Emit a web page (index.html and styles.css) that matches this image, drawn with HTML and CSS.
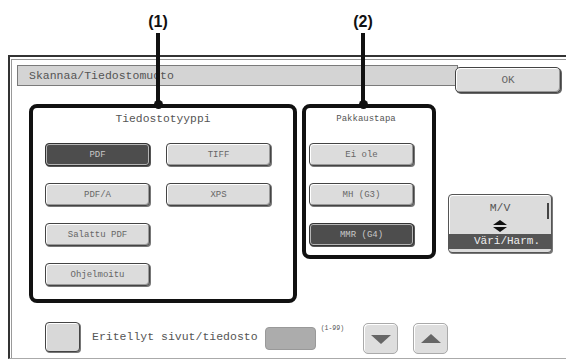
FILE: index.html
```html
<!DOCTYPE html>
<html>
<head>
<meta charset="utf-8">
<link rel="stylesheet" href="styles.css">
</head>
<body>
<div class="page">
  <div class="screen">
    <div class="inner">
      <div class="header">
        <div class="titlebar">Skannaa/Tiedostomuoto</div>
        <div class="okbtn">OK</div>
      </div>
      <div class="main">
        <div class="group g1">
          <div class="gtitle">Tiedostotyyppi</div>
          <div class="grid2">
            <div class="btn dark">PDF</div>
            <div class="btn">TIFF</div>
            <div class="btn">PDF/A</div>
            <div class="btn">XPS</div>
            <div class="btn">Salattu PDF</div>
            <div class="empty"></div>
            <div class="btn">Ohjelmoitu</div>
          </div>
        </div>
        <div class="group g2">
          <div class="gtitle small">Pakkaustapa</div>
          <div class="grid1">
            <div class="btn">Ei ole</div>
            <div class="btn">MH (G3)</div>
            <div class="btn dark">MMR (G4)</div>
          </div>
        </div>
        <div class="mv">
          <div class="mvtop">M/V</div>
          <span class="mvbar"></span>
          <svg class="mvarrows" width="14" height="12" viewBox="0 0 14 12">
            <polygon points="7,0 14,5 0,5" fill="#111"/>
            <polygon points="0,7 14,7 7,12" fill="#111"/>
          </svg>
          <div class="mvband">Väri/Harm.</div>
        </div>
      </div>
      <div class="bottom">
        <div class="check"></div>
        <div class="blabel">Eritellyt sivut/tiedosto</div>
        <div class="field"></div>
        <div class="range">(1-99)</div>
        <div class="arrowbtn down">
          <svg width="20" height="10" viewBox="0 0 20 10"><polygon points="0,0 20,0 10,9" fill="#666"/></svg>
        </div>
        <div class="arrowbtn up">
          <svg width="20" height="10" viewBox="0 0 20 10"><polygon points="0,9 20,9 10,0" fill="#666"/></svg>
        </div>
      </div>
    </div>
  </div>
  <div class="callout c1"><span class="clabel">(1)</span><i class="stem"></i><i class="dot"></i></div>
  <div class="callout c2"><span class="clabel">(2)</span><i class="stem"></i><i class="dot"></i></div>
</div>
</body>
</html>
```

FILE: styles.css
```css
html, body {
  margin: 0;
  padding: 0;
  background: #fff;
}
.page {
  position: relative;
  width: 566px;
  height: 361px;
  overflow: hidden;
  font-family: "Liberation Mono", "DejaVu Sans Mono", monospace;
}
.screen {
  margin: 55px 0 0 8px;
  height: 301px;
  border-top: 2px solid #333;
  border-left: 2px solid #333;
  border-bottom: 1px solid #aaa;
}
.inner {
  margin: 2px 0 0 1px;
  height: 299px;
  box-sizing: border-box;
  border-top: 1px solid #999;
  border-left: 1px solid #999;
}
.header {
  display: flex;
  align-items: flex-start;
  margin-top: 5px;
  height: 28px;
}
.titlebar {
  flex: 1;
  margin-left: 5px;
  height: 21px;
  box-sizing: border-box;
  border: 1px solid #7a7a7a;
  background: #d4d4d4;
  padding-left: 11px;
  font-size: 11.5px;
  line-height: 19px;
  color: #555;
}
.okbtn {
  width: 106px;
  height: 26px;
  box-sizing: border-box;
  margin: 2px 5px 0 -3px;
  border: 1px solid #444;
  border-radius: 5px;
  background: #dcdcdc;
  box-shadow: inset 1px 1px 0 #fff, inset -1px -1px 0 #999, 1px 1px 0 #666;
  font-size: 11px;
  line-height: 24px;
  text-align: center;
  color: #666;
}
.main {
  display: flex;
  align-items: flex-start;
  margin-top: 11px;
  padding-left: 17px;
}
.group {
  box-sizing: border-box;
  border: 4px solid #111;
  border-radius: 8px;
}
.g1 {
  width: 268px;
  height: 199px;
}
.g2 {
  width: 134px;
  height: 155px;
  margin-left: 5px;
}
.gtitle {
  padding-top: 4px;
  font-size: 11.3px;
  line-height: 14px;
  text-align: center;
  color: #555;
}
.gtitle.small {
  font-size: 9px;
  padding-right: 6px;
}
.grid2 {
  display: grid;
  grid-template-columns: 105px 105px;
  column-gap: 16px;
  row-gap: 17px;
  margin-top: 17px;
  padding-left: 12px;
}
.grid1 {
  display: grid;
  grid-template-columns: 105px;
  row-gap: 17px;
  margin-top: 17px;
  padding-left: 3px;
}
.btn {
  height: 23px;
  box-sizing: border-box;
  border: 1px solid #444;
  border-radius: 4px;
  background: #dcdcdc;
  box-shadow: inset 1px 1px 0 #fff, inset -1px -1px 0 #9a9a9a, 1px 1px 0 #777;
  font-size: 9px;
  color: #666;
  display: flex;
  align-items: center;
  justify-content: center;
}
.btn.dark {
  background: #4d4d4d;
  color: #c8c8c8;
  border-color: #333;
  box-shadow: inset 0 0 0 1px #b5b5b5, 1px 1px 0 #555;
}
.mv {
  position: relative;
  width: 104px;
  height: 59px;
  box-sizing: border-box;
  margin: 90px 0 0 12px;
  border: 1px solid #555;
  border-radius: 4px;
  background: #dcdcdc;
  box-shadow: inset 1px 1px 0 #fff, 1px 1px 0 #777;
  display: flex;
  flex-direction: column;
  align-items: center;
}
.mvtop {
  padding-top: 6px;
  font-size: 11.5px;
  line-height: 14px;
  color: #555;
}
.mvbar {
  position: absolute;
  right: 2px;
  top: 8px;
  width: 2px;
  height: 16px;
  background: #444;
}
.mvarrows {
  display: block;
  margin-top: 5px;
}
.mvband {
  align-self: stretch;
  margin-top: 2px;
  height: 15px;
  background: #555;
  color: #eee;
  font-size: 11px;
  line-height: 15px;
  text-align: center;
  padding-left: 14px;
}
.bottom {
  display: flex;
  align-items: flex-start;
  margin-top: 19px;
  padding-left: 33px;
}
.check {
  width: 35px;
  height: 30px;
  box-sizing: border-box;
  border: 1px solid #444;
  border-radius: 4px;
  background: #d8d8d8;
  box-shadow: inset 1px 1px 0 #fff, 1px 1px 0 #777;
}
.blabel {
  margin-left: 12px;
  font-size: 11.5px;
  line-height: 30px;
  color: #555;
}
.field {
  width: 51px;
  height: 23px;
  box-sizing: border-box;
  margin: 5px 0 0 7px;
  border: 1px solid #999;
  border-radius: 4px;
  background: #acacac;
}
.range {
  margin: 3px 0 0 5px;
  font-size: 6.5px;
  line-height: 8px;
  color: #555;
}
.arrowbtn {
  width: 35px;
  height: 31px;
  box-sizing: border-box;
  margin-top: 1px;
  border: 1px solid #aaa;
  border-radius: 5px;
  background: #dedede;
  box-shadow: inset 1px 1px 0 #fff;
  display: flex;
  align-items: center;
  justify-content: center;
}
.arrowbtn svg {
  display: block;
  margin-top: 3px;
}
.arrowbtn.down {
  margin-left: 19px;
}
.arrowbtn.up {
  margin-left: 15px;
}
.arrowbtn.up svg {
  margin-top: 0;
}
.callout {
  position: absolute;
  top: 12px;
  width: 40px;
  display: flex;
  flex-direction: column;
  align-items: center;
}
.c1 { left: 138px; }
.c2 { left: 343px; }
.clabel {
  font-family: "Liberation Sans", Arial, sans-serif;
  font-weight: bold;
  font-size: 16px;
  line-height: 20px;
  color: #111;
}
.stem {
  display: block;
  width: 4px;
  height: 73px;
  margin-top: 1px;
  background: #111;
}
.dot {
  display: block;
  width: 9px;
  height: 9px;
  margin-top: -6px;
  border-radius: 50%;
  background: #111;
}
```
